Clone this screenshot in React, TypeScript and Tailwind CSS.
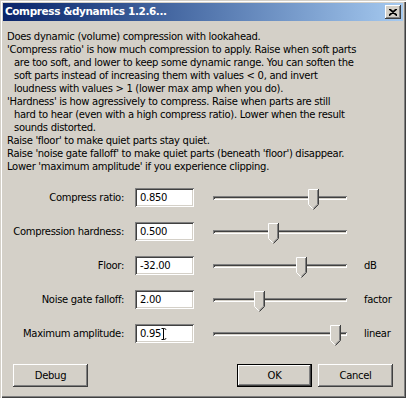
import React from 'react';

const DESCRIPTION: { text: string; indent?: boolean }[] = [
  { text: 'Does dynamic (volume) compression with lookahead.' },
  { text: "'Compress ratio' is how much compression to apply. Raise when soft parts" },
  { text: 'are too soft, and lower to keep some dynamic range. You can soften the', indent: true },
  { text: 'soft parts instead of increasing them with values < 0, and invert', indent: true },
  { text: 'loudness with values > 1 (lower max amp when you do).', indent: true },
  { text: "'Hardness' is how agressively to compress. Raise when parts are still" },
  { text: 'hard to hear (even with a high compress ratio). Lower when the result', indent: true },
  { text: 'sounds distorted.', indent: true },
  { text: "Raise 'floor' to make quiet parts stay quiet." },
  { text: "Raise 'noise gate falloff' to make quiet parts (beneath 'floor') disappear." },
  { text: "Lower 'maximum amplitude' if you experience clipping." },
];

const ROWS = [
  { label: 'Compress ratio:', value: '0.850', thumb: 95, unit: '' },
  { label: 'Compression hardness:', value: '0.500', thumb: 55, unit: '' },
  { label: 'Floor:', value: '-32.00', thumb: 83, unit: 'dB' },
  { label: 'Noise gate falloff:', value: '2.00', thumb: 41, unit: 'factor' },
  { label: 'Maximum amplitude:', value: '0.95', thumb: 117, unit: 'linear', cursor: true },
];

const raised =
  'shadow-[inset_-1px_-1px_0_#404040,inset_1px_1px_0_#ffffff,inset_-2px_-2px_0_#808080,inset_2px_2px_0_#d4d0c8]';
const sunken =
  'shadow-[inset_1px_1px_0_#808080,inset_-1px_-1px_0_#ffffff,inset_2px_2px_0_#404040,inset_-2px_-2px_0_#d4d0c8]';

const Thumb: React.FC<{ left: number }> = ({ left }) => (
  <svg
    className="absolute top-[1px]"
    style={{ left }}
    width="11"
    height="21"
    viewBox="0 0 11 21"
  >
    <polygon points="0,0 10,0 10,15 5,20 0,15" fill="#d4d0c8" />
    <path d="M0.5 15.5 V0.5 H10" stroke="#ffffff" fill="none" />
    <path d="M0.5 15.5 L5 20" stroke="#ffffff" fill="none" />
    <path d="M10.5 0 V15.5 L5.5 20.5" stroke="#404040" fill="none" />
    <path d="M9.5 1 V15.2 L5.3 19.4" stroke="#808080" fill="none" />
  </svg>
);

const Button: React.FC<{ label: string; isDefault?: boolean }> = ({ label, isDefault }) => (
  <div
    className={`w-[75px] h-[23px] flex items-center justify-center bg-[#d4d0c8] ${
      isDefault ? 'border border-black' : ''
    }`}
  >
    <div className={`w-full h-full flex items-center justify-center ${raised}`}>{label}</div>
  </div>
);

export default function App() {
  return (
    <div className="w-[406px] h-[398px] overflow-hidden bg-[#d4d0c8] p-[3px] flex flex-col text-black text-[10px] tracking-[-0.3px] font-['DejaVu_Sans',sans-serif] shadow-[inset_1px_1px_0_#d4d0c8,inset_2px_2px_0_#ffffff,inset_-1px_-1px_0_#404040,inset_-2px_-2px_0_#808080]">
      {/* Title bar */}
      <div className="h-[18px] flex items-center justify-between pl-[2px] pr-[2px] bg-linear-to-r from-[#0a246a] to-[#a6caf0]">
        <span className="text-white font-bold text-[10.5px] tracking-[-0.4px]">Compress &amp;dynamics 1.2.6...</span>
        <div className={`w-[16px] h-[14px] bg-[#d4d0c8] flex items-center justify-center ${raised}`}>
          <svg width="8" height="7" viewBox="0 0 8 7">
            <path d="M0 0 L8 7 M1 0 L8 6.1 M8 0 L0 7 M7 0 L0 6.1" stroke="#000" strokeWidth="1.1" />
          </svg>
        </div>
      </div>

      {/* Description */}
      <div className="pt-[9px] pl-[4px] leading-[13px]">
        {DESCRIPTION.map((line, i) => (
          <div key={i} className={`whitespace-nowrap ${line.indent ? 'pl-[7px]' : ''}`}>
            {line.text}
          </div>
        ))}
      </div>

      {/* Parameter rows */}
      <div className="mt-[15px] flex flex-col gap-[15px]">
        {ROWS.map((row) => (
          <div key={row.label} className="h-[19px] flex items-center">
            <div className="w-[121px] text-right whitespace-nowrap">{row.label}</div>
            <div className={`relative ml-[11px] w-[59px] h-[19px] bg-white flex items-center pl-[5px] ${sunken}`}>
              {row.value}
              {row.cursor && (
                <svg className="absolute left-[26px] top-[4px]" width="6" height="12" viewBox="0 0 6 12">
                  <path d="M0.5 0.5 H2.5 V11.5 H0.5 M2.5 0.5 C4 0.5 5 1 5 2 M2.5 11.5 C4 11.5 5 11 5 10" stroke="#000" fill="none" />
                </svg>
              )}
            </div>
            <div className="relative ml-[19px] w-[134px] h-[19px] flex items-center">
              <div className={`w-full h-[4px] bg-[#d4d0c8] ${sunken}`} />
              <Thumb left={row.thumb} />
            </div>
            <div className="ml-[17px]">{row.unit}</div>
          </div>
        ))}
      </div>

      {/* Buttons */}
      <div className="mt-[21px] px-[10px] flex justify-between">
        <Button label="Debug" />
        <div className="flex gap-[6px]">
          <Button label="OK" isDefault />
          <Button label="Cancel" />
        </div>
      </div>
    </div>
  );
}
